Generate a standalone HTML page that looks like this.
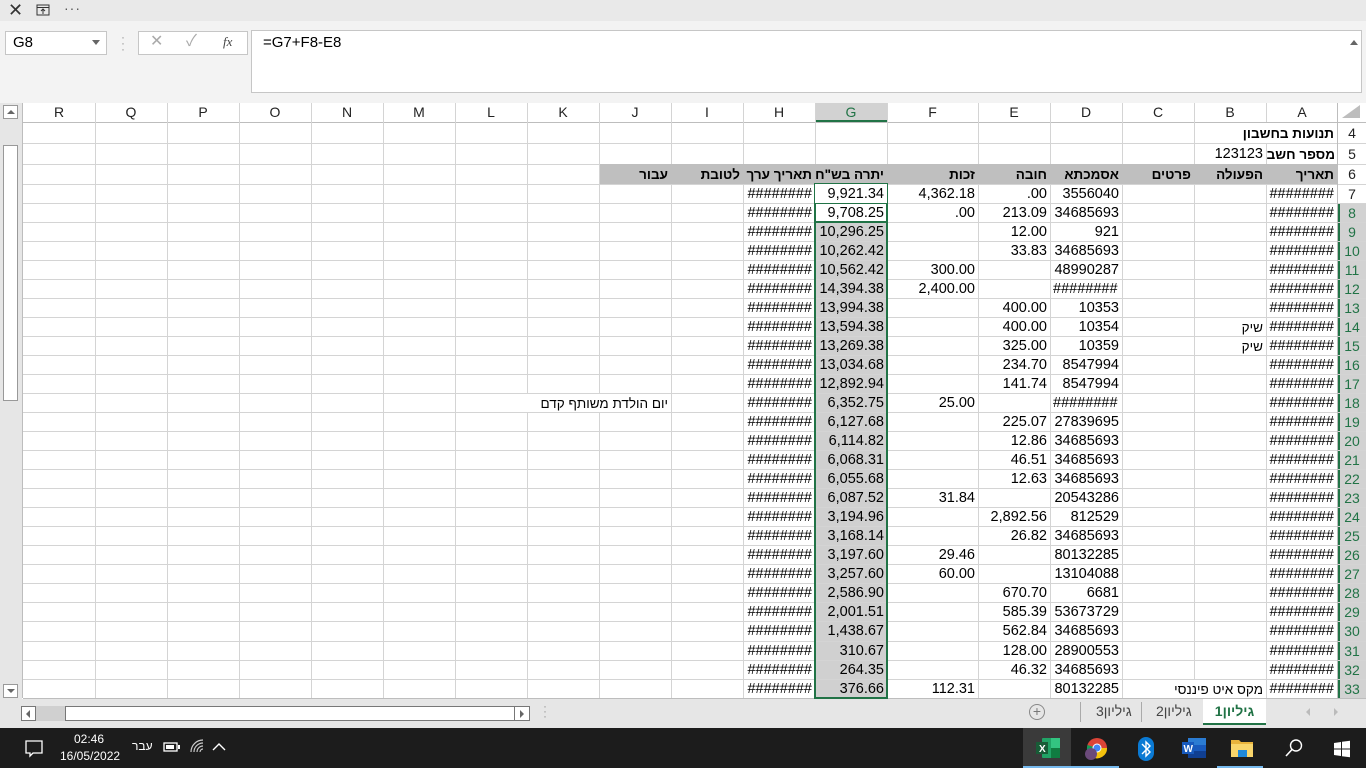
<!DOCTYPE html>
<html><head><meta charset="utf-8"><style>
*{margin:0;padding:0;box-sizing:border-box}
body{width:1366px;height:768px;overflow:hidden;background:#fff;font-family:"Liberation Sans","Noto Sans CJK JP",sans-serif;position:relative;color:#000}
.abs{position:absolute}
.r{position:absolute;left:0;width:1366px;height:19px;font-size:14.5px;line-height:19px}
.r span{position:absolute;top:0;white-space:nowrap}
.r span[dir=rtl]{font-size:13.5px}
.A{right:32px}.B{right:103px}.C{right:175px}.D{right:247px}.E{right:319px}.F{right:391px}.G{right:482px}.H{right:554px}.I{right:626px}.J{right:698px}
.Dl{left:1053px}
.rh{position:absolute;left:1338px;width:28px;text-align:center;font-size:14px;color:#222}
.ch{position:absolute;top:103px;height:19px;line-height:19px;text-align:center;font-size:14px;color:#222;width:72px}
b{font-weight:bold}
</style></head><body>
<div class="abs" style="left:0;top:0;width:1366px;height:21px;background:#e9e9e9"></div>
<div class="abs" style="left:8px;top:0;font-size:18px;line-height:20px;color:#333">✕</div>
<svg class="abs" style="left:36px;top:3px" width="14" height="14"><rect x="1" y="2" width="12" height="10" fill="none" stroke="#333"/><line x1="1" y1="4.5" x2="13" y2="4.5" stroke="#333"/><path d="M7 11V6M5 8l2-2 2 2" stroke="#333" fill="none"/></svg>
<div class="abs" style="left:64px;top:0;font-size:14px;line-height:16px;color:#555;letter-spacing:1px">···</div>
<div class="abs" style="left:0;top:21px;width:1366px;height:82px;background:#f3f3f3"></div>
<div class="abs" style="left:5px;top:31px;width:102px;height:24px;background:#fff;border:1px solid #c6c6c6;font-size:15px;line-height:22px;padding-left:7px">G8</div>
<div class="abs" style="left:92px;top:40px;width:0;height:0;border-left:4px solid transparent;border-right:4px solid transparent;border-top:5px solid #666"></div>
<div class="abs" style="left:121px;top:34px;font-size:12px;color:#999;line-height:6px">·<br>·<br>·</div>
<div class="abs" style="left:138px;top:31px;width:110px;height:24px;background:#fff;border:1px solid #c6c6c6"></div>
<div class="abs" style="left:150px;top:31px;font-size:16px;line-height:22px;color:#aaa">✕</div>
<div class="abs" style="left:186px;top:31px;font-size:16px;line-height:22px;color:#aaa">✓</div>
<div class="abs" style="left:223px;top:31px;font-size:13px;line-height:22px;color:#444;font-style:italic;font-family:'Liberation Serif',serif">fx</div>
<div class="abs" style="left:251px;top:30px;width:1111px;height:63px;background:#fff;border:1px solid #c6c6c6;font-size:15px;padding:3px 0 0 11px">=G7+F8-E8</div>
<div class="abs" style="left:1350px;top:40px;width:0;height:0;border-left:4px solid transparent;border-right:4px solid transparent;border-bottom:5px solid #666"></div>
<div class="abs" style="left:0;top:103px;width:22px;height:596px;background:#e6e6e6"></div>
<div class="abs" style="left:3px;top:105px;width:15px;height:14px;background:#fff;border:1px solid #999"></div>
<div class="abs" style="left:7px;top:110px;border-left:4px solid transparent;border-right:4px solid transparent;border-bottom:4px solid #666"></div>
<div class="abs" style="left:3px;top:145px;width:15px;height:256px;background:#fff;border:1px solid #999"></div>
<div class="abs" style="left:3px;top:684px;width:15px;height:14px;background:#fff;border:1px solid #999"></div>
<div class="abs" style="left:7px;top:689px;border-left:4px solid transparent;border-right:4px solid transparent;border-top:4px solid #666"></div>
<div class="abs" style="left:599px;top:164px;width:739px;height:20px;background:#bfbfbf"></div>
<div class="abs" style="left:815px;top:222px;width:72px;height:476px;background:#d0d0d0"></div>
<div class="abs" style="left:815px;top:103px;width:72px;height:19px;background:#d2d2d2;border-bottom:2px solid #217346"></div>
<div class="abs" style="left:1338px;top:203px;width:28px;height:495px;background:#d2d2d2;border-left:2px solid #217346"></div>
<svg class="abs" style="left:0;top:0" width="1366" height="700">
<g stroke="#d4d4d4" stroke-width="1">
<line x1="23" y1="122.5" x2="1366" y2="122.5" stroke="#bdbdbd"/>
<line x1="23" y1="143.5" x2="1366" y2="143.5"/><line x1="23" y1="164.5" x2="599" y2="164.5"/><line x1="1338" y1="164.5" x2="1366" y2="164.5"/>
<line x1="23" y1="184.5" x2="1366" y2="184.5"/>
<line x1="23" y1="203.5" x2="1366" y2="203.5"/><line x1="23" y1="222.5" x2="1366" y2="222.5"/><line x1="23" y1="241.5" x2="1366" y2="241.5"/><line x1="23" y1="260.5" x2="1366" y2="260.5"/><line x1="23" y1="279.5" x2="1366" y2="279.5"/><line x1="23" y1="298.5" x2="1366" y2="298.5"/><line x1="23" y1="317.5" x2="1366" y2="317.5"/><line x1="23" y1="336.5" x2="1366" y2="336.5"/><line x1="23" y1="355.5" x2="1366" y2="355.5"/><line x1="23" y1="374.5" x2="1366" y2="374.5"/><line x1="23" y1="393.5" x2="1366" y2="393.5"/><line x1="23" y1="412.5" x2="1366" y2="412.5"/><line x1="23" y1="431.5" x2="1366" y2="431.5"/><line x1="23" y1="450.5" x2="1366" y2="450.5"/><line x1="23" y1="469.5" x2="1366" y2="469.5"/><line x1="23" y1="488.5" x2="1366" y2="488.5"/><line x1="23" y1="507.5" x2="1366" y2="507.5"/><line x1="23" y1="526.5" x2="1366" y2="526.5"/><line x1="23" y1="545.5" x2="1366" y2="545.5"/><line x1="23" y1="564.5" x2="1366" y2="564.5"/><line x1="23" y1="583.5" x2="1366" y2="583.5"/><line x1="23" y1="602.5" x2="1366" y2="602.5"/><line x1="23" y1="621.5" x2="1366" y2="621.5"/><line x1="23" y1="641.5" x2="1366" y2="641.5"/><line x1="23" y1="660.5" x2="1366" y2="660.5"/><line x1="23" y1="679.5" x2="1366" y2="679.5"/><line x1="23" y1="698.5" x2="1366" y2="698.5" stroke="#bdbdbd"/>
</g>
<g stroke="#d4d4d4">
<line x1="22.5" y1="103" x2="22.5" y2="698" stroke="#bdbdbd"/>
<line x1="95.5" y1="103" x2="95.5" y2="698"/><line x1="167.5" y1="103" x2="167.5" y2="698"/><line x1="239.5" y1="103" x2="239.5" y2="698"/><line x1="311.5" y1="103" x2="311.5" y2="698"/><line x1="383.5" y1="103" x2="383.5" y2="698"/><line x1="455.5" y1="103" x2="455.5" y2="698"/>
<line x1="527.5" y1="103" x2="527.5" y2="393"/><line x1="527.5" y1="412" x2="527.5" y2="698"/>
<line x1="599.5" y1="103" x2="599.5" y2="393"/><line x1="599.5" y1="412" x2="599.5" y2="698"/>
<line x1="671.5" y1="103" x2="671.5" y2="164"/><line x1="671.5" y1="184" x2="671.5" y2="698"/>
<line x1="743.5" y1="103" x2="743.5" y2="164"/><line x1="743.5" y1="184" x2="743.5" y2="698"/>
<line x1="815.5" y1="103" x2="815.5" y2="164"/><line x1="887.5" y1="103" x2="887.5" y2="164"/><line x1="887.5" y1="184" x2="887.5" y2="698"/>
<line x1="978.5" y1="103" x2="978.5" y2="164"/><line x1="978.5" y1="184" x2="978.5" y2="698"/>
<line x1="1050.5" y1="103" x2="1050.5" y2="164"/><line x1="1050.5" y1="184" x2="1050.5" y2="698"/>
<line x1="1122.5" y1="103" x2="1122.5" y2="164"/><line x1="1122.5" y1="184" x2="1122.5" y2="698"/>
<line x1="1194.5" y1="103" x2="1194.5" y2="164"/><line x1="1194.5" y1="184" x2="1194.5" y2="679"/>
<line x1="1266.5" y1="103" x2="1266.5" y2="122"/><line x1="1266.5" y1="143" x2="1266.5" y2="164"/><line x1="1266.5" y1="184" x2="1266.5" y2="698"/>
<line x1="1337.5" y1="103" x2="1337.5" y2="698" stroke="#bdbdbd"/>
</g>
<path d="M1342 118L1360 118L1360 105Z" fill="#bdbdbd"/>
<rect x="815" y="184" width="72" height="514" fill="none" stroke="#217346" stroke-width="2"/>
<rect x="815" y="203" width="72" height="19" fill="#fff" stroke="#217346" stroke-width="2"/>
</svg>
<div class="abs" style="left:815px;top:184px;width:72px;height:19px;background:#fff"></div>
<div class="ch" style="left:23px">R</div><div class="ch" style="left:95px">Q</div><div class="ch" style="left:167px">P</div><div class="ch" style="left:239px">O</div><div class="ch" style="left:311px">N</div><div class="ch" style="left:383px">M</div><div class="ch" style="left:455px">L</div><div class="ch" style="left:527px">K</div><div class="ch" style="left:599px">J</div><div class="ch" style="left:671px">I</div><div class="ch" style="left:743px">H</div><div class="ch" style="left:815px;color:#217346">G</div><div class="ch" style="left:887px;width:91px">F</div><div class="ch" style="left:978px">E</div><div class="ch" style="left:1050px">D</div><div class="ch" style="left:1122px">C</div><div class="ch" style="left:1194px">B</div><div class="ch" style="left:1266px">A</div>
<div class="r" style="top:124px"><span class="A" dir="rtl"><b>תנועות בחשבון</b></span><span class="rh">4</span></div>
<div class="r" style="top:145px"><div class="abs" style="left:1266px;width:69px;height:19px;overflow:hidden;direction:rtl;text-align:right;font-size:13.5px"><b style="white-space:nowrap">מספר חשבון</b></div><span class="B">123123</span><span class="rh">5</span></div>
<div class="r" style="top:165px"><span class="A" dir="rtl"><b>תאריך</b></span><span class="B" dir="rtl"><b>הפעולה</b></span><span class="C" dir="rtl"><b>פרטים</b></span><span class="D" dir="rtl"><b>אסמכתא</b></span><span class="E" dir="rtl"><b>חובה</b></span><span class="F" dir="rtl"><b>זכות</b></span><span class="G" dir="rtl"><b>יתרה בש"ח</b></span><span class="H" dir="rtl"><b>תאריך ערך</b></span><span class="I" dir="rtl"><b>לטובת</b></span><span class="J" dir="rtl"><b>עבור</b></span><span class="rh">6</span></div>
<div class="r" style="top:185px"><span class="A">########</span><span class="D">3556040</span><span class="E">.00</span><span class="F">4,362.18</span><span class="G">9,921.34</span><span class="H">########</span><span class="rh">7</span></div>
<div class="r" style="top:204px"><span class="A">########</span><span class="D">34685693</span><span class="E">213.09</span><span class="F">.00</span><span class="G">9,708.25</span><span class="H">########</span><span class="rh" style="color:#217346">8</span></div>
<div class="r" style="top:223px"><span class="A">########</span><span class="D">921</span><span class="E">12.00</span><span class="G">10,296.25</span><span class="H">########</span><span class="rh" style="color:#217346">9</span></div>
<div class="r" style="top:242px"><span class="A">########</span><span class="D">34685693</span><span class="E">33.83</span><span class="G">10,262.42</span><span class="H">########</span><span class="rh" style="color:#217346">10</span></div>
<div class="r" style="top:261px"><span class="A">########</span><span class="D">48990287</span><span class="F">300.00</span><span class="G">10,562.42</span><span class="H">########</span><span class="rh" style="color:#217346">11</span></div>
<div class="r" style="top:280px"><span class="A">########</span><span class="Dl">########</span><span class="F">2,400.00</span><span class="G">14,394.38</span><span class="H">########</span><span class="rh" style="color:#217346">12</span></div>
<div class="r" style="top:299px"><span class="A">########</span><span class="D">10353</span><span class="E">400.00</span><span class="G">13,994.38</span><span class="H">########</span><span class="rh" style="color:#217346">13</span></div>
<div class="r" style="top:318px"><span class="A">########</span><span class="B" dir="rtl">שיק</span><span class="D">10354</span><span class="E">400.00</span><span class="G">13,594.38</span><span class="H">########</span><span class="rh" style="color:#217346">14</span></div>
<div class="r" style="top:337px"><span class="A">########</span><span class="B" dir="rtl">שיק</span><span class="D">10359</span><span class="E">325.00</span><span class="G">13,269.38</span><span class="H">########</span><span class="rh" style="color:#217346">15</span></div>
<div class="r" style="top:356px"><span class="A">########</span><span class="D">8547994</span><span class="E">234.70</span><span class="G">13,034.68</span><span class="H">########</span><span class="rh" style="color:#217346">16</span></div>
<div class="r" style="top:375px"><span class="A">########</span><span class="D">8547994</span><span class="E">141.74</span><span class="G">12,892.94</span><span class="H">########</span><span class="rh" style="color:#217346">17</span></div>
<div class="r" style="top:394px"><span class="A">########</span><span class="Dl">########</span><span class="F">25.00</span><span class="G">6,352.75</span><span class="H">########</span><span class="J" dir="rtl">יום הולדת משותף קדם</span><span class="rh" style="color:#217346">18</span></div>
<div class="r" style="top:413px"><span class="A">########</span><span class="D">27839695</span><span class="E">225.07</span><span class="G">6,127.68</span><span class="H">########</span><span class="rh" style="color:#217346">19</span></div>
<div class="r" style="top:432px"><span class="A">########</span><span class="D">34685693</span><span class="E">12.86</span><span class="G">6,114.82</span><span class="H">########</span><span class="rh" style="color:#217346">20</span></div>
<div class="r" style="top:451px"><span class="A">########</span><span class="D">34685693</span><span class="E">46.51</span><span class="G">6,068.31</span><span class="H">########</span><span class="rh" style="color:#217346">21</span></div>
<div class="r" style="top:470px"><span class="A">########</span><span class="D">34685693</span><span class="E">12.63</span><span class="G">6,055.68</span><span class="H">########</span><span class="rh" style="color:#217346">22</span></div>
<div class="r" style="top:489px"><span class="A">########</span><span class="D">20543286</span><span class="F">31.84</span><span class="G">6,087.52</span><span class="H">########</span><span class="rh" style="color:#217346">23</span></div>
<div class="r" style="top:508px"><span class="A">########</span><span class="D">812529</span><span class="E">2,892.56</span><span class="G">3,194.96</span><span class="H">########</span><span class="rh" style="color:#217346">24</span></div>
<div class="r" style="top:527px"><span class="A">########</span><span class="D">34685693</span><span class="E">26.82</span><span class="G">3,168.14</span><span class="H">########</span><span class="rh" style="color:#217346">25</span></div>
<div class="r" style="top:546px"><span class="A">########</span><span class="D">80132285</span><span class="F">29.46</span><span class="G">3,197.60</span><span class="H">########</span><span class="rh" style="color:#217346">26</span></div>
<div class="r" style="top:565px"><span class="A">########</span><span class="D">13104088</span><span class="F">60.00</span><span class="G">3,257.60</span><span class="H">########</span><span class="rh" style="color:#217346">27</span></div>
<div class="r" style="top:584px"><span class="A">########</span><span class="D">6681</span><span class="E">670.70</span><span class="G">2,586.90</span><span class="H">########</span><span class="rh" style="color:#217346">28</span></div>
<div class="r" style="top:603px"><span class="A">########</span><span class="D">53673729</span><span class="E">585.39</span><span class="G">2,001.51</span><span class="H">########</span><span class="rh" style="color:#217346">29</span></div>
<div class="r" style="top:622px"><span class="A">########</span><span class="D">34685693</span><span class="E">562.84</span><span class="G">1,438.67</span><span class="H">########</span><span class="rh" style="color:#217346">30</span></div>
<div class="r" style="top:642px"><span class="A">########</span><span class="D">28900553</span><span class="E">128.00</span><span class="G">310.67</span><span class="H">########</span><span class="rh" style="color:#217346">31</span></div>
<div class="r" style="top:661px"><span class="A">########</span><span class="D">34685693</span><span class="E">46.32</span><span class="G">264.35</span><span class="H">########</span><span class="rh" style="color:#217346">32</span></div>
<div class="r" style="top:680px"><span class="A">########</span><span class="B" dir="rtl">מקס איט פיננסי</span><span class="D">80132285</span><span class="F">112.31</span><span class="G">376.66</span><span class="H">########</span><span class="rh" style="color:#217346">33</span></div>
<div class="abs" style="left:0;top:699px;width:1366px;height:29px;background:#e6e6e6"></div>
<div class="abs" style="left:21px;top:706px;width:15px;height:15px;background:#fff;border:1px solid #777"></div>
<div class="abs" style="left:26px;top:710px;border-top:4px solid transparent;border-bottom:4px solid transparent;border-right:4px solid #666"></div>
<div class="abs" style="left:36px;top:706px;width:30px;height:15px;background:#d0d0d0"></div>
<div class="abs" style="left:65px;top:706px;width:450px;height:15px;background:#fff;border:1px solid #777"></div>
<div class="abs" style="left:514px;top:706px;width:16px;height:15px;background:#fff;border:1px solid #777"></div>
<div class="abs" style="left:520px;top:710px;border-top:4px solid transparent;border-bottom:4px solid transparent;border-left:4px solid #666"></div>
<div class="abs" style="left:543px;top:704px;font-size:12px;color:#999;line-height:5px">·<br>·<br>·</div>
<div class="abs" style="left:1029px;top:704px;width:16px;height:16px;border:1.5px solid #888;border-radius:50%;font-size:14px;line-height:13px;text-align:center;color:#777">+</div>
<div class="abs" style="left:1080px;top:702px;width:1px;height:20px;background:#aaa"></div>
<div class="abs" style="left:1096px;top:703px;font-size:14px;color:#444" dir="rtl">גיליון3</div>
<div class="abs" style="left:1141px;top:702px;width:1px;height:20px;background:#aaa"></div>
<div class="abs" style="left:1156px;top:703px;font-size:14px;color:#444" dir="rtl">גיליון2</div>
<div class="abs" style="left:1203px;top:699px;width:63px;height:26px;background:#fff;border-bottom:2px solid #217346;font-size:14px;font-weight:bold;color:#217346;text-align:center;line-height:24px" dir="rtl">גיליון1</div>
<div class="abs" style="left:1306px;top:708px;border-top:4px solid transparent;border-bottom:4px solid transparent;border-right:4px solid #bbb"></div>
<div class="abs" style="left:1334px;top:708px;border-top:4px solid transparent;border-bottom:4px solid transparent;border-left:4px solid #bbb"></div>
<div class="abs" style="left:0;top:728px;width:1366px;height:40px;background:#1c1c1c"></div>
<svg class="abs" style="left:24px;top:739px" width="20" height="20"><path d="M2 2H18V14H9L6 17V14H2Z" fill="none" stroke="#fff" stroke-width="1.3"/></svg>
<div class="abs" style="left:60px;top:731px;width:58px;text-align:center;color:#fff;font-size:12px;line-height:17px">02:46<br>16/05/2022</div>
<div class="abs" style="left:132px;top:739px;color:#fff;font-size:12px" dir="rtl">עבר</div>
<svg class="abs" style="left:163px;top:741px" width="18" height="12"><rect x="1" y="2" width="13" height="8" fill="none" stroke="#fff" stroke-width="1.3"/><rect x="3" y="4" width="8" height="4" fill="#fff"/><rect x="15" y="4" width="2" height="4" fill="#fff"/></svg>
<svg class="abs" style="left:189px;top:738px" width="16" height="16"><path d="M2 14A12 12 0 0 1 14 2M5 14A9 9 0 0 1 14 5M8 14A6 6 0 0 1 14 8M11 14A3 3 0 0 1 14 11" fill="none" stroke="#ccc" stroke-width="1.2"/></svg>
<svg class="abs" style="left:212px;top:742px" width="14" height="10"><path d="M1 8L7 2L13 8" fill="none" stroke="#fff" stroke-width="1.4"/></svg>
<div class="abs" style="left:1023px;top:728px;width:48px;height:40px;background:#3a3a3a;border-bottom:2px solid #76b9ed"></div>
<svg class="abs" style="left:1035px;top:737px" width="26" height="22"><rect x="7" y="1" width="18" height="20" rx="1" fill="#21a366"/><rect x="16" y="1" width="9" height="10" fill="#33c481"/><rect x="16" y="11" width="9" height="10" fill="#107c41"/><rect x="1" y="5" width="12" height="12" fill="#185c37"/><text x="4" y="15" fill="#fff" font-size="10" font-family="Liberation Sans" font-weight="bold">X</text></svg>
<div class="abs" style="left:1071px;top:766px;width:48px;height:2px;background:#76b9ed"></div>
<svg class="abs" style="left:1083px;top:736px" width="26" height="26"><circle cx="14" cy="12" r="10" fill="#db4437"/><path d="M14 12L24 12A10 10 0 0 1 9 21Z" fill="#f4c20d"/><path d="M14 12L9 21A10 10 0 0 1 4.5 9Z" fill="#0f9d58"/><circle cx="14" cy="12" r="4.5" fill="#fff"/><circle cx="14" cy="12" r="3.5" fill="#4285f4"/><circle cx="8" cy="18" r="6" fill="#6b4a7a"/></svg>
<svg class="abs" style="left:1137px;top:736px" width="18" height="26"><rect x="1" y="1" width="16" height="24" rx="8" fill="#0a7ad4"/><path d="M5 8L13 16L9 20V6L13 10L5 18" fill="none" stroke="#fff" stroke-width="1.4"/></svg>
<svg class="abs" style="left:1181px;top:737px" width="26" height="22"><rect x="7" y="1" width="18" height="20" fill="#2b7cd3"/><rect x="7" y="8" width="18" height="6" fill="#185abd"/><rect x="7" y="14" width="18" height="7" fill="#103f91"/><rect x="1" y="5" width="12" height="12" fill="#185abd"/><text x="2.5" y="15" fill="#fff" font-size="10" font-family="Liberation Sans" font-weight="bold">W</text></svg>
<div class="abs" style="left:1217px;top:766px;width:46px;height:2px;background:#76b9ed"></div>
<svg class="abs" style="left:1230px;top:737px" width="24" height="22"><path d="M1 3H9L11 5H23V20H1Z" fill="#e8b33c"/><rect x="1" y="7" width="22" height="13" fill="#f8d56b"/><rect x="8" y="13" width="9" height="7" fill="#1e88d8"/></svg>
<svg class="abs" style="left:1284px;top:738px" width="20" height="20"><circle cx="12" cy="7.5" r="5.5" fill="none" stroke="#fff" stroke-width="1.4"/><path d="M8 11.5L2 18" stroke="#fff" stroke-width="1.6"/></svg>
<svg class="abs" style="left:1333px;top:740px" width="18" height="18"><path d="M1 3L8 2V8.5H1ZM9 1.8L17 0.8V8.5H9ZM1 9.5H8V16L1 15ZM9 9.5H17V17.2L9 16.2Z" fill="#fff"/></svg>
</body></html>
